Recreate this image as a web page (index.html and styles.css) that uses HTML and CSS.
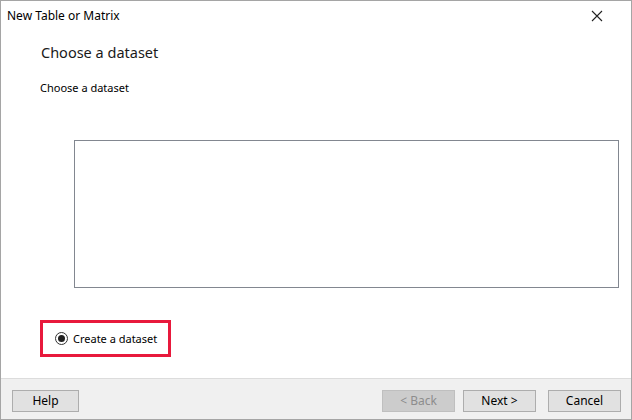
FILE: index.html
```html
<!DOCTYPE html>
<html>
<head>
<meta charset="utf-8">
<link rel="stylesheet" href="styles.css">
</head>
<body>
<div class="window">
  <div class="titlebar">
    <span class="title">New Table or Matrix</span>
    <svg class="close" width="12" height="12" viewBox="0 0 12 12"><path d="M1 1 L11 11 M11 1 L1 11" stroke="#222" stroke-width="1.1" fill="none"/></svg>
  </div>
  <div class="content">
    <div class="heading">Choose a dataset</div>
    <div class="subheading">Choose a dataset</div>
    <div class="listbox"></div>
    <div class="radio-wrap">
      <span class="radio"><span class="dot"></span></span>
      <span class="radio-label">Create a dataset</span>
    </div>
  </div>
  <div class="footer">
    <button class="btn">Help</button>
    <div class="spacer"></div>
    <button class="btn disabled">&lt; Back</button>
    <button class="btn next">Next &gt;</button>
    <button class="btn cancel">Cancel</button>
  </div>
</div>
</body>
</html>
```
FILE: styles.css
```css
html, body {
  margin: 0;
  padding: 0;
  background: #ffffff;
}
body {
  font-family: "Noto Sans", "Open Sans", sans-serif;
  color: #000;
}
.window {
  width: 632px;
  height: 420px;
  box-sizing: border-box;
  border: 1px solid #a5a5a5;
  display: flex;
  flex-direction: column;
  background: #fff;
}
.titlebar {
  height: 29px;
  display: flex;
  align-items: center;
  justify-content: space-between;
  padding: 0 28px 0 6px;
  flex: none;
}
.title {
  font-size: 12px;
  color: #000;
}
.close {
  display: block;
}
.content {
  flex: 1;
  display: flex;
  flex-direction: column;
  padding-left: 39px;
}
.heading {
  font-size: 14.5px;
  color: #1a1a1a;
  margin-top: 12px;
  line-height: 20px;
  padding-left: 1px;
}
.subheading {
  font-size: 11px;
  margin-top: 18px;
  line-height: 15px;
}
.listbox {
  margin-top: 45px;
  margin-left: 34px;
  width: 545px;
  height: 148px;
  box-sizing: border-box;
  border: 1px solid #828790;
}
.radio-wrap {
  margin-top: 32px;
  width: 131px;
  height: 37px;
  box-sizing: border-box;
  border: 3px solid #e8193c;
  display: flex;
  align-items: center;
  padding-left: 12px;
  gap: 5px;
}
.radio {
  width: 13px;
  height: 13px;
  box-sizing: border-box;
  border: 1px solid #333;
  border-radius: 50%;
  display: flex;
  align-items: center;
  justify-content: center;
  background: #fff;
}
.dot {
  width: 7px;
  height: 7px;
  border-radius: 50%;
  background: #222;
}
.radio-label {
  font-size: 11px;
  color: #000;
}
.footer {
  height: 41px;
  flex: none;
  box-sizing: border-box;
  border-top: 1px solid #dcdcdc;
  background: #f0f0f0;
  display: flex;
  align-items: flex-start;
  padding: 11px 10px 0 11px;
}
.spacer {
  flex: 1;
}
.btn {
  font-family: "Noto Sans", "Open Sans", sans-serif;
  font-size: 12px;
  height: 22px;
  width: 73px;
  box-sizing: border-box;
  border: 1px solid #adadad;
  background: #e1e1e1;
  color: #000;
  padding: 0;
  margin: 0;
  line-height: 18px;
}
.btn:first-child {
  width: 67px;
}
.btn.disabled {
  background: #cccccc;
  border-color: #bfbfbf;
  color: #8d8d8d;
}
.btn.next {
  margin-left: 8px;
}
.btn.cancel {
  margin-left: 12px;
}
```
